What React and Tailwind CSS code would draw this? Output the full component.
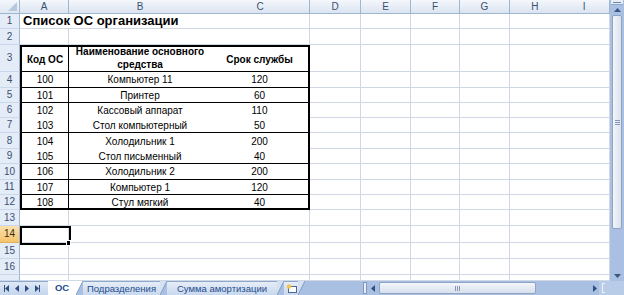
import clsx from 'clsx'

const colLetters = ['A', 'B', 'C', 'D', 'E', 'F', 'G']

const items = [
  { code: '100', name: 'Компьютер 11', term: '120', line: true },
  { code: '101', name: 'Принтер', term: '60', line: true },
  { code: '102', name: 'Кассовый аппарат', term: '110', line: false },
  { code: '103', name: 'Стол компьютерный', term: '50', line: true },
  { code: '104', name: 'Холодильник 1', term: '200', line: false },
  { code: '105', name: 'Стол письменный', term: '40', line: true },
  { code: '106', name: 'Холодильник 2', term: '200', line: true },
  { code: '107', name: 'Компьютер 1', term: '120', line: true },
  { code: '108', name: 'Стул мягкий', term: '40', line: false },
]

const grid = 'border-[#d0d7e5]'

function RowHead({ n, active }) {
  return (
    <div
      className={clsx(
        'flex items-center justify-center border-r border-b border-r-[#9eb6ce] text-[10px] leading-none',
        active
          ? 'bg-linear-to-b from-[#fbe0ad] to-[#f5c46a] border-b-[#e2b15c] text-[#3a2a10]'
          : 'bg-[#e4ecf7] border-b-[#c9d7ea] text-[#3b4f70]'
      )}
    >
      {n}
    </div>
  )
}

function Cell({ col, children, className }) {
  // колонка B без правой линии (как на скрине), остальные с сеткой
  return (
    <div
      className={clsx(
        'border-b',
        col === 2 ? '' : 'border-r',
        grid,
        className
      )}
    >
      {children}
    </div>
  )
}

function OsTable() {
  return (
    <div className="col-start-2 col-span-3 row-start-4 row-span-10 border-2 border-black bg-white grid grid-cols-[47px_142px_1fr] grid-rows-[25px_16px_15px_15px_15px_16px_15px_16px_15px_1fr] text-[10px] text-black">
      <div className="flex items-center justify-center border-r border-b border-black font-bold">Код ОС</div>
      <div className="flex items-end justify-center border-b border-black font-bold overflow-hidden text-center leading-[13px]">
        Наименование основного средства
      </div>
      <div className="flex items-center justify-center border-b border-black font-bold">Срок службы</div>

      {items.map((it) => {
        const b = it.line ? 'border-b border-black' : ''
        return [
          <div key={it.code + 'a'} className={clsx('flex items-center justify-center border-r border-black', b)}>
            {it.code}
          </div>,
          <div key={it.code + 'b'} className={clsx('flex items-center justify-center', b)}>
            {it.name}
          </div>,
          <div key={it.code + 'c'} className={clsx('flex items-center justify-center', b)}>
            {it.term}
          </div>,
        ]
      })}
    </div>
  )
}

function Sheet() {
  const rows = []
  for (let r = 1; r <= 17; r++) {
    rows.push(<RowHead key={'h' + r} n={r < 17 ? r : ''} active={r === 14} />)
    for (let c = 1; c <= 8; c++) {
      if (r >= 3 && r <= 12 && c <= 3) continue
      if (r === 1 && c >= 2 && c <= 3) continue
      const key = r + '-' + c
      if (r === 1 && c === 1) {
        rows.push(
          <div key={key} className={clsx('col-span-3 border-r border-b flex items-end pl-[3px] pb-px', grid)}>
            <span className="text-[13px] font-bold leading-none text-black whitespace-nowrap">Список ОС организации</span>
          </div>
        )
        continue
      }
      if (r === 14 && c === 1) {
        rows.push(
          <Cell key={key} col={c} className="relative">
            <div className="absolute left-0 top-0 w-[51px] h-[19px] border-2 border-black z-10" />
            <div className="absolute left-[46px] top-[14px] w-[5px] h-[6px] bg-black border border-white z-10" />
          </Cell>
        )
        continue
      }
      rows.push(<Cell key={key} col={c} />)
    }
  }

  return (
    <div className="grid grid-cols-[20px_49px_142px_99px_51px_50px_49px_50px_100px] grid-rows-[14px_15px_16px_27px_16px_15px_15px_15px_16px_15px_16px_15px_15px_16px_17px_16px_16px_6px] bg-white overflow-hidden">
      {/* угол выделения всего листа */}
      <div className="relative border-r border-b border-[#9eb6ce] bg-linear-to-b from-[#f4f7fc] to-[#dfe7f2]">
        <svg className="absolute right-[2px] bottom-[2px]" width="9" height="9" viewBox="0 0 9 9">
          <polygon points="9,0 9,9 0,9" fill="#b7c8de" />
        </svg>
      </div>
      {colLetters.map((l, i) => (
        <div
          key={l}
          className={clsx(
            'flex items-center justify-center border-b border-[#9eb6ce] bg-linear-to-b from-[#f4f7fc] to-[#dbe4f1] text-[10px] text-[#3b4f70] leading-none',
            i === 1 ? '' : 'border-r'
          )}
        >
          {l}
        </div>
      ))}
      <div className="flex border-r border-b border-[#9eb6ce] bg-linear-to-b from-[#f4f7fc] to-[#dbe4f1] text-[10px] text-[#3b4f70] leading-none">
        <div className="flex-1 flex items-center justify-center">H</div>
        <div className="flex-1 flex items-center justify-center">I</div>
      </div>
      <OsTable />
      {rows}
    </div>
  )
}

function VScroll() {
  return (
    <div className="w-[14px] h-[281px] flex flex-col bg-[#a9c0e2]">
      <div className="h-[5px] mx-px bg-[#e9eef6] border-b border-[#8ea7cc] flex items-center justify-center">
        <div className="w-[8px] h-px bg-[#6d86ad]" />
      </div>
      <div className="h-[10px] flex items-center justify-center">
        <svg width="7" height="4" viewBox="0 0 7 4"><polygon points="0,4 7,4 3.5,0" fill="#3b5680" /></svg>
      </div>
      <div className="h-[214px] mx-[2px] rounded-[2px] border border-[#8ea4c6] bg-linear-to-r from-[#f3f6fa] to-[#dae2ed] flex items-center justify-center">
        <div className="flex flex-col gap-px">
          <div className="w-[5px] h-px bg-[#8597b2]" />
          <div className="w-[5px] h-px bg-[#8597b2]" />
          <div className="w-[5px] h-px bg-[#8597b2]" />
        </div>
      </div>
      <div className="flex-1" />
      <div className="h-[10px] flex items-center justify-center">
        <svg width="7" height="4" viewBox="0 0 7 4"><polygon points="0,0 7,0 3.5,4" fill="#3b5680" /></svg>
      </div>
    </div>
  )
}

function Slant({ fill = '#d5e1f1' }) {
  return (
    <svg width="7" height="14" viewBox="0 0 7 14" className="shrink-0">
      <polygon points="0,0 7,0 0,14" fill={fill} />
      <line x1="0" y1="14" x2="7" y2="0" stroke="#7f9cc6" strokeWidth="1" />
    </svg>
  )
}

function Arrow({ dir }) {
  const pts = dir === 'l' ? '4,0 4,7 0,3.5' : '0,0 0,7 4,3.5'
  return (
    <svg width="4" height="7" viewBox="0 0 4 7"><polygon points={pts} fill="#2f4f80" /></svg>
  )
}

function TabBar() {
  return (
    <div className="flex h-[14px] bg-[#a9c0e2] text-[9.5px] leading-none">
      <div className="w-[48px] flex items-center gap-[6px] pl-[4px] bg-linear-to-b from-[#dfe8f5] to-[#c4d5ec] border-t border-[#8ea7cc]">
        <div className="flex items-center"><div className="w-px h-[7px] bg-[#2f4f80]" /><Arrow dir="l" /></div>
        <Arrow dir="l" />
        <Arrow dir="r" />
        <div className="flex items-center"><Arrow dir="r" /><div className="w-px h-[7px] bg-[#2f4f80]" /></div>
      </div>
      <div className="w-[28px] bg-white flex items-center justify-center text-[#1e4c8c] font-bold">ОС</div>
      <Slant fill="#ffffff" />
      <div className="w-[77px] flex items-center justify-center bg-linear-to-b from-[#e6edf7] to-[#c8d8ee] border-t border-[#8ea7cc] text-[#1e4c8c]">
        Подразделения
      </div>
      <Slant />
      <div className="w-[110px] flex items-center justify-center bg-linear-to-b from-[#e6edf7] to-[#c8d8ee] border-t border-[#8ea7cc] text-[#1e4c8c]">
        Сумма амортизации
      </div>
      <Slant />
      <div className="w-[14px] flex items-center justify-center bg-linear-to-b from-[#e6edf7] to-[#c8d8ee] border-t border-[#8ea7cc]">
        <svg width="11" height="9" viewBox="0 0 11 9">
          <rect x="2.5" y="2.5" width="8" height="6" fill="#ffffff" stroke="#4a6a9a" />
          <circle cx="3" cy="2.5" r="2.2" fill="#f6c44a" />
        </svg>
      </div>
      <Slant />
      <div className="w-[58px] bg-[#a9c0e2]" />
      <div className="w-[4px] my-px bg-[#e9eef6] border border-[#7f98bf]" />
      <div className="w-[12px] flex items-center justify-center"><Arrow dir="l" /></div>
      <div className="w-[157px] my-px rounded-[2px] border border-[#8ea4c6] bg-linear-to-b from-[#f3f6fa] to-[#d8e0ec] flex items-center justify-center gap-px">
        <div className="w-px h-[5px] bg-[#8597b2]" />
        <div className="w-px h-[5px] bg-[#8597b2]" />
        <div className="w-px h-[5px] bg-[#8597b2]" />
      </div>
      <div className="w-[54px]" />
      <div className="w-[9px] flex items-center justify-center"><Arrow dir="r" /></div>
      <div className="flex-1 bg-[#b8cbe7] flex items-center pl-[3px]">
        <div className="w-[3px] h-[10px] border-l border-y border-[#eef3fa]" />
      </div>
    </div>
  )
}

export default function App() {
  return (
    <div className="w-[624px] h-[295px] overflow-hidden bg-white font-['Liberation_Sans',Arial,sans-serif]">
      <div className="flex">
        <div className="w-[610px]">
          <Sheet />
        </div>
        <VScroll />
      </div>
      <TabBar />
    </div>
  )
}
